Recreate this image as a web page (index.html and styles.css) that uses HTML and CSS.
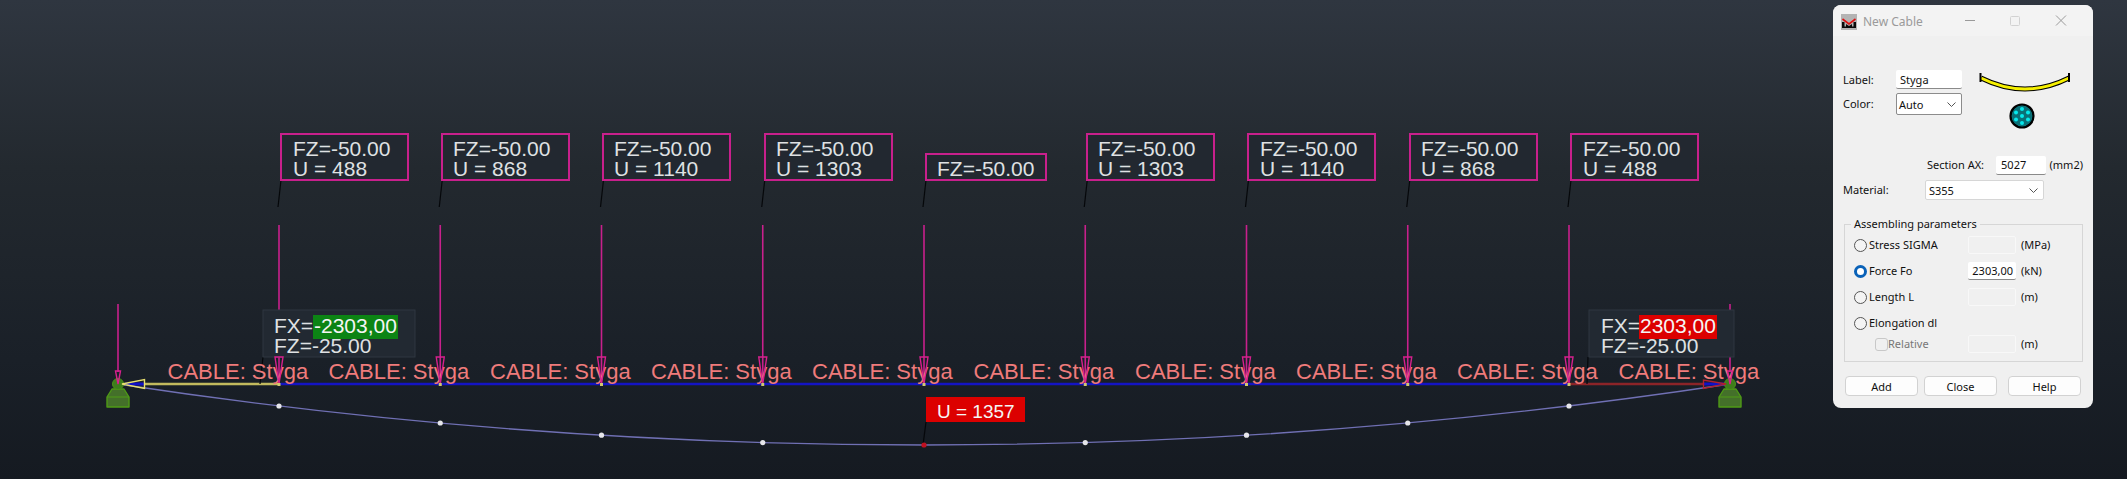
FILE: index.html
```html
<!DOCTYPE html>
<html lang="en">
<head>
<meta charset="utf-8">
<title>New Cable</title>
<link rel="stylesheet" href="styles.css">
</head>
<body>
<main class="viewport">
  <svg class="scene" width="2127" height="479" viewBox="0 0 2127 479">
    <defs>
      <g id="pin">
        <line class="pin-line" x1="0" y1="225" x2="0" y2="380"/>
      </g>
      <g id="arrow">
        <polygon class="pin-head" points="-4,357 4,357 0,384"/>
        <rect class="tiny-dot" x="-1.5" y="383" width="3" height="3"/>
      </g>
      <g id="pawn">
        <path class="pawn-body" d="M-6 389 L6 389 L11 397 L11 407 L-11 407 L-11 397 Z"/>
        <line class="pawn-seam" x1="-11" y1="397" x2="11" y2="397"/>
        <circle class="pawn-head" cx="0" cy="384" r="5.5"/>
      </g>
      <g id="leader">
        <line class="leader" x1="2" y1="180" x2="-1" y2="207"/>
      </g>
    </defs>

    <use href="#pin" x="279"/><use href="#pin" x="440.25"/><use href="#pin" x="601.5"/>
    <use href="#pin" x="762.75"/><use href="#pin" x="924"/><use href="#pin" x="1085.25"/>
    <use href="#pin" x="1246.5"/><use href="#pin" x="1407.75"/><use href="#pin" x="1569"/>
    <use href="#leader" x="279"/><use href="#leader" x="440.25"/><use href="#leader" x="601.5"/>
    <use href="#leader" x="762.75"/><use href="#leader" x="924"/><use href="#leader" x="1085.25"/>
    <use href="#leader" x="1246.5"/><use href="#leader" x="1407.75"/><use href="#leader" x="1569"/>
    <line class="pin-line" x1="118" y1="304" x2="118" y2="372"/>
    <line class="pin-line" x1="1730" y1="304" x2="1730" y2="372"/>

    <!-- top load boxes -->
    <rect class="load-box" x="281" y="134" width="127" height="46"/>
    <text class="load-text" x="293" y="156">FZ=-50.00</text><text class="load-text" x="293" y="176">U = 488</text>
    <rect class="load-box" x="442" y="134" width="127" height="46"/>
    <text class="load-text" x="453" y="156">FZ=-50.00</text><text class="load-text" x="453" y="176">U = 868</text>
    <rect class="load-box" x="603" y="134" width="127" height="46"/>
    <text class="load-text" x="614" y="156">FZ=-50.00</text><text class="load-text" x="614" y="176">U = 1140</text>
    <rect class="load-box" x="765" y="134" width="127" height="46"/>
    <text class="load-text" x="776" y="156">FZ=-50.00</text><text class="load-text" x="776" y="176">U = 1303</text>
    <rect class="load-box" x="926" y="154" width="120" height="26"/>
    <text class="load-text" x="937" y="176">FZ=-50.00</text>
    <rect class="load-box" x="1087" y="134" width="127" height="46"/>
    <text class="load-text" x="1098" y="156">FZ=-50.00</text><text class="load-text" x="1098" y="176">U = 1303</text>
    <rect class="load-box" x="1248" y="134" width="127" height="46"/>
    <text class="load-text" x="1260" y="156">FZ=-50.00</text><text class="load-text" x="1260" y="176">U = 1140</text>
    <rect class="load-box" x="1410" y="134" width="127" height="46"/>
    <text class="load-text" x="1421" y="156">FZ=-50.00</text><text class="load-text" x="1421" y="176">U = 868</text>
    <rect class="load-box" x="1571" y="134" width="127" height="46"/>
    <text class="load-text" x="1583" y="156">FZ=-50.00</text><text class="load-text" x="1583" y="176">U = 488</text>

    <!-- beam and deformed shape -->
    <line class="beam-start" x1="144" y1="384" x2="279" y2="384"/>
    <line class="beam" x1="279" y1="384" x2="1569" y2="384"/>
    <line class="beam-end" x1="1569" y1="384" x2="1704" y2="384"/>
    <path class="deformed" d="M118 384 Q924 506 1730 384"/>
    <line class="leader" x1="263" y1="357" x2="260" y2="384"/>
    <line class="leader" x1="1588" y1="357" x2="1587" y2="384"/>
    <line class="leader" x1="926" y1="422" x2="923" y2="445"/>
    <g class="nodes">
      <circle cx="279" cy="406" r="2.6"/><circle cx="440.25" cy="423" r="2.6"/><circle cx="601.5" cy="435.2" r="2.6"/>
      <circle cx="762.75" cy="442.6" r="2.6"/><circle cx="1085.25" cy="442.6" r="2.6"/><circle cx="1246.5" cy="435.2" r="2.6"/>
      <circle cx="1407.75" cy="423" r="2.6"/><circle cx="1569" cy="406" r="2.6"/>
    </g>
    <circle class="node-peak" cx="924" cy="445" r="2.6"/>

    <!-- reaction boxes -->
    <rect class="result-box" x="263" y="310" width="152" height="47"/>
    <rect class="hl-green" x="313" y="315" width="85" height="24"/>
    <text class="load-text" x="274" y="333">FX=</text><text class="hl-text" x="314" y="333">-2303,00</text>
    <text class="load-text" x="274" y="353">FZ=-25.00</text>
    <rect class="result-box" x="1589" y="310" width="145" height="47"/>
    <rect class="hl-red" x="1639" y="315" width="78" height="24"/>
    <text class="load-text" x="1601" y="333">FX=</text><text class="hl-text" x="1640" y="333">2303,00</text>
    <text class="load-text" x="1601" y="353">FZ=-25.00</text>

    <rect class="hl-red" x="926" y="397" width="99" height="25"/>
    <text class="peak-text" x="937" y="418">U = 1357</text>

    <!-- cable labels -->
    <text class="cable" x="167.5" y="378.5">CABLE: Styga</text><text class="cable" x="328.5" y="378.5">CABLE: Styga</text>
    <text class="cable" x="490" y="378.5">CABLE: Styga</text><text class="cable" x="651" y="378.5">CABLE: Styga</text>
    <text class="cable" x="812" y="378.5">CABLE: Styga</text><text class="cable" x="973.5" y="378.5">CABLE: Styga</text>
    <text class="cable" x="1135" y="378.5">CABLE: Styga</text><text class="cable" x="1296" y="378.5">CABLE: Styga</text>
    <text class="cable" x="1457" y="378.5">CABLE: Styga</text><text class="cable" x="1618.5" y="378.5">CABLE: Styga</text>

    <use href="#arrow" x="279"/><use href="#arrow" x="440.25"/><use href="#arrow" x="601.5"/>
    <use href="#arrow" x="762.75"/><use href="#arrow" x="924"/><use href="#arrow" x="1085.25"/>
    <use href="#arrow" x="1246.5"/><use href="#arrow" x="1407.75"/><use href="#arrow" x="1569"/>

    <!-- supports -->
    <use href="#pawn" x="118"/>
    <use href="#pawn" x="1730"/>
    <polygon class="pin-head" points="115.5,371 120.5,371 118,384"/>
    <polygon class="pin-head" points="1727.5,371 1732.5,371 1730,384"/>
    <line class="force-core" x1="125" y1="384" x2="144" y2="384"/>
    <polygon class="force-left" points="122,384 144.5,379.5 144.5,388.5"/>
    <line class="force-core" x1="1704" y1="384" x2="1724" y2="384"/>
    <polygon class="force-right" points="1726,384 1703.5,380 1703.5,388.5"/>
  </svg>

  <section class="dialog">
    <header class="titlebar">
      <svg class="app-icon" width="16" height="16" viewBox="0 0 16 16">
        <rect class="app-icon-bg" width="16" height="16"/>
        <path class="app-icon-m" d="M1 14 V8 H3.5 V12.5 H5 V10 L8 12 L11 10 V12.5 H12.5 V8 H15 V14 Z"/>
        <path class="app-icon-v" d="M1.5 5 L8 10 L14.5 5"/>
      </svg>
      <span class="title">New Cable</span>
      <span class="controls">
        <svg width="110" height="12" viewBox="0 0 110 12">
          <line class="ctl" x1="0" y1="5.5" x2="10" y2="5.5"/>
          <rect class="ctl-off" x="45.5" y="1.5" width="9" height="9" rx="1"/>
          <path class="ctl" d="M91 .5 L101 10.5 M101 .5 L91 10.5"/>
        </svg>
      </span>
    </header>
    <div class="content">
      <div class="identity">
        <div class="identity-fields">
          <label class="lbl">Label:</label><span class="field field-label">Styga</span>
          <label class="lbl">Color:</label>
          <span class="select select-color">Auto
            <svg class="chev" width="9" height="5" viewBox="0 0 9 5"><path d="M.5 .5 L4.5 4.5 L8.5 .5"/></svg>
          </span>
        </div>
        <svg class="preview" width="92" height="58" viewBox="0 0 92 58">
          <path class="cable-out" d="M2 5 Q46 27 90 5"/>
          <path class="cable-in" d="M2 5 Q46 27 90 5"/>
          <line class="cable-cap" x1="1.5" y1="0" x2="1.5" y2="9"/>
          <line class="cable-cap" x1="90" y1="0" x2="90" y2="9"/>
          <circle class="strand" cx="43" cy="43" r="11.5"/>
          <circle class="strand-speck" cx="43" cy="43" r="10"/>
          <g class="strand-wires">
            <circle cx="43" cy="43" r="2"/><circle cx="43" cy="36" r="2"/><circle cx="43" cy="50" r="2"/>
            <circle cx="37" cy="39.5" r="2"/><circle cx="49" cy="39.5" r="2"/><circle cx="37" cy="46.5" r="2"/><circle cx="49" cy="46.5" r="2"/>
          </g>
        </svg>
      </div>
      <div class="section-row">
        <label class="lbl">Section AX:</label>
        <span class="field field-section">5027</span>
        <span class="lbl unit-mm">(mm2)</span>
      </div>
      <div class="material-row">
        <label class="lbl">Material:</label>
        <span class="select select-material">S355
          <svg class="chev" width="9" height="5" viewBox="0 0 9 5"><path d="M.5 .5 L4.5 4.5 L8.5 .5"/></svg>
        </span>
      </div>
      <fieldset class="group">
        <legend class="legend">Assembling parameters</legend>
        <div class="param">
          <span class="radio"></span><span class="lbl param-name">Stress SIGMA</span>
          <span class="field field-num is-off"></span><span class="lbl param-unit">(MPa)</span>
        </div>
        <div class="param">
          <span class="radio is-on"></span><span class="lbl param-name">Force Fo</span>
          <span class="field field-num">2303,00</span><span class="lbl param-unit">(kN)</span>
        </div>
        <div class="param">
          <span class="radio"></span><span class="lbl param-name">Length L</span>
          <span class="field field-num is-off"></span><span class="lbl param-unit">(m)</span>
        </div>
        <div class="param">
          <span class="radio"></span><span class="lbl param-name">Elongation dl</span>
        </div>
        <div class="param param-sub">
          <span class="check"></span><span class="lbl is-muted param-rel">Relative</span>
          <span class="field field-num is-off"></span><span class="lbl param-unit">(m)</span>
        </div>
      </fieldset>
      <div class="actions">
        <button class="btn" type="button">Add</button>
        <button class="btn" type="button">Close</button>
        <button class="btn btn-help" type="button">Help</button>
      </div>
    </div>
  </section>
</main>
</body>
</html>
```

FILE: styles.css
```css
html, body { margin: 0; padding: 0; }
body { width: 2127px; height: 479px; overflow: hidden; }
.viewport {
  position: relative;
  width: 2127px;
  height: 479px;
  overflow: hidden;
  background: linear-gradient(180deg, #2f3640 0%, #23292f 35%, #1a2028 75%, #151a21 100%);
}
.scene { display: block; position: absolute; left: 0; top: 0; }
.scene text { font-family: "Liberation Sans", Arial, sans-serif; }

.pin-line { stroke: #c8208c; stroke-width: 1.6; }
.pin-head { fill: none; stroke: #d8208e; stroke-width: 1.4; }
.tiny-dot { fill: #d0c870; }
.leader { stroke: #05070a; stroke-width: 1.2; }
.load-box { fill: #222830; stroke: #c8208c; stroke-width: 2; }
.load-text { font-size: 21px; fill: #dfe1e3; }
.hl-text { font-size: 21px; fill: #f5f5f5; }
.peak-text { font-size: 19px; fill: #f5f5f5; }
.result-box { fill: #222932; stroke: #2f3741; stroke-width: 1; }
.hl-green { fill: #0c8414; }
.hl-red { fill: #dc0000; }
.cable { font-size: 22px; fill: #ef7b7b; }

.beam { stroke: #1414c4; stroke-width: 2.4; }
.beam-start { stroke: #c2ba5e; stroke-width: 2.4; }
.beam-end { stroke: #8c2428; stroke-width: 2.4; }
.deformed { fill: none; stroke: #7070b4; stroke-width: 1.3; }
.nodes circle { fill: #e6e6ea; }
.node-peak { fill: #c01020; }
.force-core { stroke: #1010c8; stroke-width: 3; }
.force-left { fill: none; stroke: #e8e070; stroke-width: 1.4; }
.force-right { fill: none; stroke: #b02030; stroke-width: 1.4; }
.pawn-body { fill: #44702a; stroke: #4e9a16; stroke-width: 1.4; stroke-linejoin: round; }
.pawn-seam { stroke: #4e9a16; stroke-width: 1; }
.pawn-head { fill: #3f7d1c; stroke: #4a9416; stroke-width: 1; }

/* Dialog */
.dialog {
  position: absolute;
  left: 1833px;
  top: 5px;
  width: 260px;
  height: 403px;
  box-sizing: border-box;
  border-radius: 8px;
  background: #f0f0f0;
  font-family: "Noto Sans", "Open Sans", sans-serif;
  font-size: 11px;
  color: #101010;
  overflow: hidden;
}
.titlebar {
  display: flex;
  align-items: center;
  height: 31px;
  padding-left: 8px;
  padding-right: 18px;
  background: #f3f3f3;
}
.app-icon { display: block; margin-right: 6px; margin-top: 2px; }
.app-icon-bg { fill: #b4b4b4; }
.app-icon-m { fill: #0a0a0a; }
.app-icon-v { fill: none; stroke: #e01010; stroke-width: 1.6; }
.title { font-size: 12px; color: #9a9a9a; flex: 1; margin-top: 2px; }
.controls { display: flex; margin-top: 1px; }
.controls svg { display: block; }
.ctl { stroke: #9a9a9a; stroke-width: 1; fill: none; }
.ctl-off { stroke: #d2d2d2; stroke-width: 1; fill: none; }

.content { padding: 34px 10px 12px; display: flex; flex-direction: column; }
.identity { display: flex; align-items: flex-start; height: 45px; }
.identity-fields {
  display: grid;
  grid-template-columns: 53px 66px;
  grid-template-rows: 19px 22px;
  row-gap: 4px;
  align-items: center;
}
.preview { display: block; margin-left: 17px; margin-top: 3px; flex: none; }
.cable-out { fill: none; stroke: #000; stroke-width: 5; }
.cable-in { fill: none; stroke: #f6f000; stroke-width: 3; }
.cable-cap { stroke: #000; stroke-width: 2; }
.strand { fill: #0a8088; stroke: #000; stroke-width: 2.2; }
.strand-speck { fill: #0a6f76; }
.strand-wires circle { fill: #05e8ec; }

.lbl { white-space: nowrap; line-height: 14px; }
.is-muted { color: #777; }
.field {
  box-sizing: border-box;
  display: flex;
  align-items: center;
  background: #fff;
  border-bottom: 1px solid #8a8a8a;
  border-radius: 2px;
  padding-left: 4px;
}
.field-label { height: 19px; font-size: 11px; }
.select {
  box-sizing: border-box;
  display: flex;
  align-items: center;
  justify-content: space-between;
  background: #fff;
  border-radius: 2px;
  padding: 0 5px 0 2px;
}
.select-color { height: 22px; border: 1px solid #8c8c8c; }
.select-material { height: 20px; width: 119px; border: 1px solid #d6d6d6; padding-left: 3px; }
.chev { display: block; fill: none; }
.chev path { fill: none; stroke: #555; stroke-width: 1; }

.section-row {
  display: flex;
  align-items: center;
  height: 20px;
  margin-top: 40px;
  padding-left: 84px;
}
.field-section { width: 51px; height: 19px; margin-left: 12px; padding-left: 5px; }
.unit-mm { margin-left: 4px; }
.material-row {
  display: flex;
  align-items: center;
  justify-content: space-between;
  height: 20px;
  margin-top: 5px;
  padding-right: 39px;
}

.group {
  margin: 16px 0 0 1px;
  padding: 0;
  width: 239px;
  height: 146px;
  box-sizing: border-box;
  border: 1px solid #d6d6d6;
  display: flex;
  flex-direction: column;
}
.legend { margin-left: 6px; padding: 0 3px; line-height: 16px; }
.param {
  display: grid;
  grid-template-columns: 15px 99px 48px auto;
  align-items: center;
  column-gap: 0;
  height: 26px;
  padding-left: 9px;
}
.param-sub { grid-template-columns: 31px 83px 48px auto; margin-top: -5px; }
.param-unit { margin-left: 5px; }
.radio {
  display: block;
  box-sizing: border-box;
  width: 13px;
  height: 13px;
  border: 1px solid #555;
  border-radius: 50%;
  background: #f4f4f4;
}
.radio.is-on { background: #fff; border: 3.5px solid #0a62b8; }
.check {
  display: block;
  box-sizing: border-box;
  width: 13px;
  height: 13px;
  margin-left: 21px;
  border: 1px solid #c8c8c8;
  border-radius: 3px;
}
.param-rel { margin-left: 3px; }
.field-num { width: 48px; height: 18px; justify-content: flex-end; padding: 0 3px 0 0; }
.field-num.is-off { background: #f0f0f0; border: 1px solid #f8f8f8; }

.actions { display: flex; margin: 14px 0 0 2px; }
.btn {
  box-sizing: border-box;
  width: 73px;
  height: 20px;
  margin-right: 6px;
  padding: 0;
  background: #fdfdfd;
  border: 1px solid #d2d2d2;
  border-radius: 4px;
  font: inherit;
  color: #101010;
}
.btn-help { margin-left: 5px; margin-right: 0; }
```
